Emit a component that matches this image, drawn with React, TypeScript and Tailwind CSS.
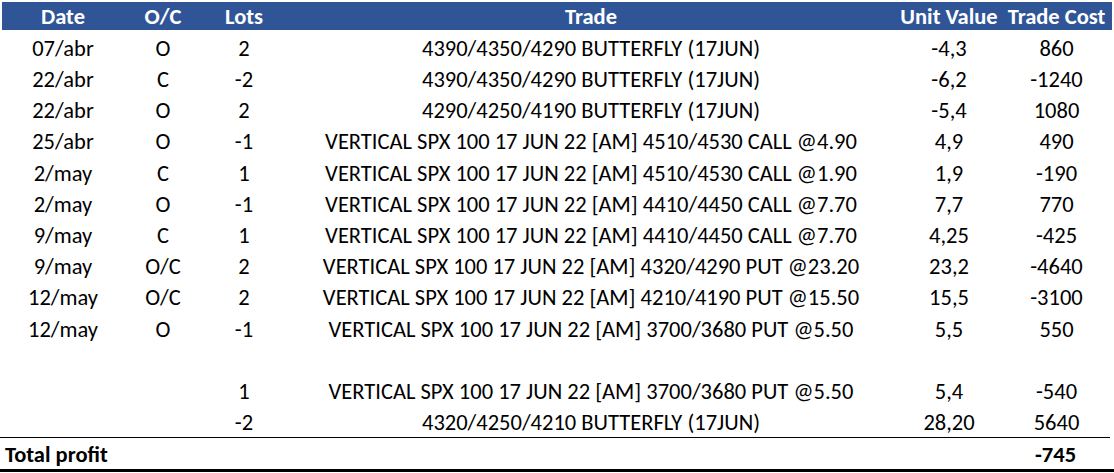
const rows: [string, string, string, string, string, string][] = [
  ['07/abr', 'O', '2', '4390/4350/4290 BUTTERFLY (17JUN)', '-4,3', '860'],
  ['22/abr', 'C', '-2', '4390/4350/4290 BUTTERFLY (17JUN)', '-6,2', '-1240'],
  ['22/abr', 'O', '2', '4290/4250/4190 BUTTERFLY (17JUN)', '-5,4', '1080'],
  ['25/abr', 'O', '-1', 'VERTICAL SPX 100 17 JUN 22 [AM] 4510/4530 CALL @4.90', '4,9', '490'],
  ['2/may', 'C', '1', 'VERTICAL SPX 100 17 JUN 22 [AM] 4510/4530 CALL @1.90', '1,9', '-190'],
  ['2/may', 'O', '-1', 'VERTICAL SPX 100 17 JUN 22 [AM] 4410/4450 CALL @7.70', '7,7', '770'],
  ['9/may', 'C', '1', 'VERTICAL SPX 100 17 JUN 22 [AM] 4410/4450 CALL @7.70', '4,25', '-425'],
  ['9/may', 'O/C', '2', 'VERTICAL SPX 100 17 JUN 22 [AM] 4320/4290 PUT @23.20', '23,2', '-4640'],
  ['12/may', 'O/C', '2', 'VERTICAL SPX 100 17 JUN 22 [AM] 4210/4190 PUT @15.50', '15,5', '-3100'],
  ['12/may', 'O', '-1', 'VERTICAL SPX 100 17 JUN 22 [AM] 3700/3680 PUT @5.50', '5,5', '550'],
  ['', '', '', '', '', ''],
  ['', '', '1', 'VERTICAL SPX 100 17 JUN 22 [AM] 3700/3680 PUT @5.50', '5,4', '-540'],
  ['', '', '-2', '4320/4250/4210 BUTTERFLY (17JUN)', '28,20', '5640'],
];

// column widths, left to right
const cols = ['w-[122px]', 'w-[78px]', 'w-[84px]', 'w-[610px]', 'w-[106px]', 'w-[109px]'];
const heads = ['Date', 'O/C', 'Lots', 'Trade', 'Unit Value', 'Trade Cost'];

export default function App() {
  return (
    <div
      className="w-[1114px] h-[473px] bg-white text-black pt-[2px] text-[22.5px] leading-none"
      style={{ fontFamily: "Carlito, 'Liberation Sans', sans-serif" }}
    >
      <div className="flex h-[28px] pt-[2px] mx-[2px] bg-[#2f5597] text-white font-bold items-center mb-[2px]">
        {heads.map((h, i) => (
          <div key={h} className={`${cols[i]} text-center whitespace-nowrap`}>
            {h}
          </div>
        ))}
      </div>
      {rows.map((r, ri) => (
        <div key={ri} className="flex h-[31.2px] pt-[3px] mx-[2px] items-center">
          {r.map((c, i) => (
            <div key={i} className={`${cols[i]} text-center whitespace-nowrap`}>
              {c}
            </div>
          ))}
        </div>
      ))}
      <div className="w-[1114px] border-b-[3px] border-black">
        <div className="flex h-[32px] pt-[2px] w-[1110px] items-center border-t border-black font-bold">
          <div className="flex-1 pl-[5px]">Total profit</div>
          <div className="w-[109px] text-center">-745</div>
        </div>
      </div>
    </div>
  );
}
